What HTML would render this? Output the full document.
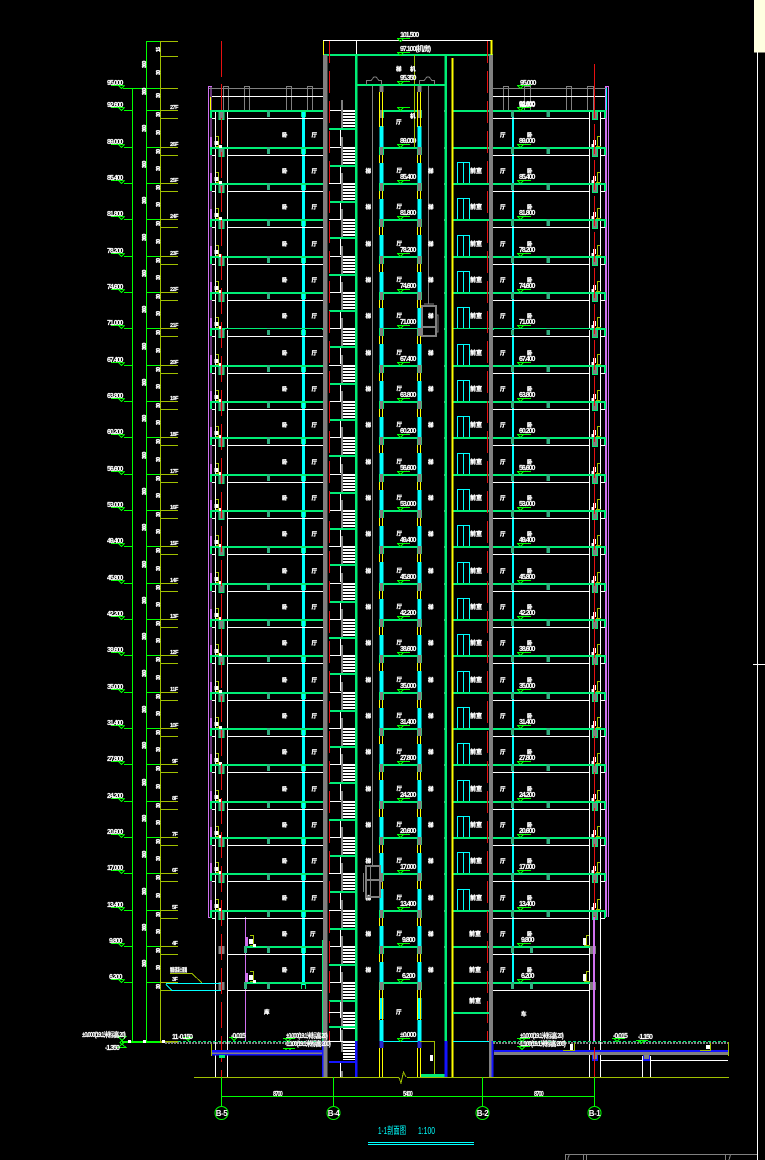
<!DOCTYPE html>
<html lang="zh">
<head>
<meta charset="utf-8">
<title>1-1剖面图</title>
<style>
html,body{margin:0;padding:0;background:#000;width:765px;height:1160px;overflow:hidden}
svg{display:block;shape-rendering:crispEdges}
text{fill:#fff;stroke:#fff;stroke-width:.15px;font:bold 7px "Liberation Sans","Noto Sans CJK SC",sans-serif;letter-spacing:-1px}
.b{font-size:5.500px;letter-spacing:0;stroke-width:.35px}
.h{font-size:6px;letter-spacing:0;stroke-width:.35px}
.c{font-size:5px;letter-spacing:-.5px;stroke-width:.35px}
.n{font-size:5.500px;letter-spacing:-.5px}
.ax{font-size:8px;letter-spacing:-.5px;text-anchor:middle;stroke:none}
.ti{fill:#0ff;stroke:none;font-size:10px;font-weight:normal;letter-spacing:0}
path{fill:none}
.w{stroke:#fff}.gy{stroke:#808080}.sg{stroke:#00ee76}.lg{stroke:#0f0}.ol{stroke:#a0c000}.cy{stroke:#0ff}.ye{stroke:#ff0}.re{stroke:#e81010}.bl{stroke:#1414ff}.pu{stroke:#d070f0}
</style>
</head>
<body>
<svg width="765" height="1160" viewBox="0 0 765 1160" xmlns="http://www.w3.org/2000/svg">
<defs>
<g id="d">
<path class="lg" d="M111,-2.500H123.500M118.500,-2.500l3,3l3,-3M124,.500H132M146,.500H160"/>
<path class="ol" d="M160,.500H178M160,8.500H178"/>
<text class="c" transform="translate(146,-15) rotate(-90)">360</text>
<text class="c" transform="translate(160,-12) rotate(-90)">30</text>
<text class="c" transform="translate(160,7) rotate(-90)">30</text>
</g>
<g id="s">
<rect x="329" y="0" width="13" height="1" fill="#fff"/>
<path class="w" stroke-width="12" stroke-dasharray="2 1" d="M349,0V18"/>
<rect x="329" y="18" width="26" height="2" fill="#00ee76"/>
<rect x="341" y="-10" width="2" height="28" fill="#808080"/>
<path class="w" d="M340.500,20V36"/>
</g>
<g id="m">
<rect x="381" y="0" width="38" height="2" fill="#00ee76"/>
<rect x="453" y="0" width="37" height="2" fill="#00ee76"/>
<rect x="379.500" y="0" width="4" height="8" fill="#808080"/>
<path class="sg" d="M379.500,0V8M383.500,0V8M417.500,0V8M421.500,0V8"/>
<rect x="417.500" y="0" width="4" height="8" fill="#808080"/>
<path class="ye" d="M379.500,8V16M382.500,8V16M417.500,8V16M420.500,8V16"/>
<rect x="379.500" y="16" width="4" height="21" fill="#0ff"/>
<rect x="417.500" y="16" width="4" height="21" fill="#0ff"/>
<path class="lg" d="M397,-2.500H410M397.500,-2.500l3,3l3,-3M517,-2.500H531M517.500,-2.500l3,3l3,-3"/>
<rect x="444" y="0" width="2" height="2" fill="#808080"/>
</g>
<g id="l">
<rect x="210" y="0" width="113" height="2" fill="#00ee76"/>
<rect x="227" y="8" width="96" height="1" fill="#fff"/>
<rect x="218.500" y="1" width="6" height="9" fill="#00ee76"/>
<rect x="219.500" y="2" width="4" height="7" fill="#808080"/>
<rect x="267" y="0" width="3" height="7" fill="#30b080"/>
<path class="sg" d="M301.500,0V7M305.500,0V7"/>
<rect x="210" y="0" width="2" height="8" fill="#00ee76"/>
<path class="w" d="M212,8.500H216"/>
</g>
<g id="r">
<rect x="493" y="0" width="113" height="2" fill="#00ee76"/>
<rect x="493" y="8" width="97" height="1" fill="#fff"/>
<rect x="600" y="8" width="5" height="1" fill="#fff"/>
<rect x="511" y="0" width="3" height="7" fill="#30b080"/>
<rect x="546.500" y="0" width="3.500" height="7" fill="#30b080"/>
<rect x="592" y="1" width="6" height="9" fill="#00ee76"/>
<rect x="593" y="2" width="4" height="7" fill="#808080"/>
<rect x="604" y="0" width="2" height="8" fill="#00ee76"/>
</g>
<g id="a"><use href="#d"/><use href="#s"/><use href="#m"/><use href="#l"/><use href="#r"/></g>
<g id="k">
<rect x="210" y="-10" width="2" height="10" fill="#d070f0"/>
<path class="ol" d="M216,-10.500H218.500V-1M216,-.500H220M600,-10.500H597.500V-1M596,-.500H601"/>
<rect x="214.500" y="-6" width="4" height="4" fill="#fff"/>
<rect x="219" y="-2" width="3" height="3" fill="#fff"/>
<rect x="593" y="-7" width="3" height="5" fill="#fff"/>
<rect x="591.500" y="-3" width="3" height="3" fill="#fff"/>
<text class="b" x="282" y="-10">卧</text>
<text class="b" x="311.500" y="-10">厅</text>
<text class="b" x="500" y="-10">厅</text>
<text class="b" x="527" y="-10">卧</text>
</g>
<g id="e">
<path class="cy" d="M457.500,0V-20.500H469.500V0M463.500,-20V0"/>
<text class="b" x="365.500" y="-10">梯</text>
<text class="b" x="428" y="-10">梯</text>
<text class="b" x="396.500" y="-10.500">厅</text>
<text class="h" x="470" y="-10">前室</text>
</g>
<g id="q">
<rect x="245" y="0" width="78" height="2" fill="#00ee76"/>
<rect x="227" y="8" width="96" height="1" fill="#fff"/>
<rect x="218.500" y="0" width="6" height="8" fill="#808080"/>
<rect x="244" y="0" width="3" height="7" fill="#30b080"/>
<rect x="267" y="0" width="3" height="7" fill="#30b080"/>
<path class="sg" d="M301.500,0V7M305.500,0V7"/>
<rect x="245" y="-9" width="3" height="9" fill="#d070f0"/>
<path class="ol" d="M250,-10.500H253.500V-1M250,-.500H254"/>
<rect x="249" y="-7" width="4" height="5" fill="#fff"/>
<rect x="253" y="-2" width="3" height="3" fill="#fff"/>
<rect x="493" y="0" width="97" height="2" fill="#00ee76"/>
<rect x="493" y="8" width="97" height="1" fill="#fff"/>
<rect x="511" y="0" width="3" height="7" fill="#30b080"/>
<rect x="530" y="0" width="3" height="7" fill="#30b080"/>
<rect x="590" y="0" width="6" height="8" fill="#808080"/>
<path class="ol" d="M589,-10.500H586.500V-1M584,-.500H590"/>
<rect x="583" y="-8" width="3" height="7" fill="#fff"/>
<text class="b" x="282" y="-10">卧</text>
<text class="b" x="310" y="-10">厅</text>
<text class="b" x="500" y="-10">厅</text>
<text class="b" x="527" y="-10">卧</text>
<text class="b" x="365.500" y="-10">梯</text>
<text class="b" x="428" y="-10">梯</text>
<text class="b" x="396.500" y="-10.500">厅</text>
<text class="h" x="469" y="-10">前室</text>
</g>
</defs>

<rect width="765" height="1160" fill="#000"/>

<!-- left dimension rails -->
<path class="lg" d="M132.500,88V1041M146.500,41V1041M146,41.500H160M123,88.500H160"/>
<path class="ol" d="M160.500,41V1041M160,41.500H178M160,56.500H178M160,88.500H178"/>
<text class="c" transform="translate(146,68) rotate(-90)">360</text>
<text class="c" transform="translate(160,52) rotate(-90)">15</text>
<text class="c" transform="translate(160,75) rotate(-90)">30</text>
<path class="lg" d="M111,85.500H123.500M118.500,85.500l3,3l3,-3"/>
<text x="107" y="85">95.000</text>

<!-- continuous verticals under the slabs -->
<path class="pu" d="M208.500,86V917.500H212M208.500,86.500H212M211,86V917"/>
<rect x="605" y="86" width="2" height="831" fill="#d070f0"/>
<path class="pu" d="M608.500,86V917M605,86.500H609"/>
<path class="ye" d="M210.500,97V110"/>
<path class="cy" d="M606.500,88V110"/>
<path class="w" d="M215.500,111V1077M227.500,111V1077M589.500,111V1077M600.500,111V1077"/>
<rect x="302" y="110" width="3" height="875" fill="#0ff"/>
<rect x="512" y="110" width="2" height="875" fill="#0ff"/>
<path class="gy" d="M372.500,85V866M428.500,85V304"/>
<path class="pu" d="M245.500,917V1041"/>

<!-- parapet -->
<path class="gy" d="M209,88.500H323M491,88.500H606M223.500,110V86.500H228.500V110M244.500,110V86.500H249.500V110M286.500,110V86.500H291.500V110M307.500,110V86.500H312.500V110M503.500,110V86.500H508.500V110M524.500,110V86.500H530.500V110M566.500,110V86.500H571.500V110M587.500,110V86.500H593.500V110"/>
<path class="w" d="M212,96.500H323M491,96.500H605"/>

<!-- floors -->
<g transform="translate(0,110)"><use href="#a"/><text x="107" y="-3">92.600</text><text class="n" x="170" y="-1">27F</text><text x="519" y="-4">92.600</text></g>
<g transform="translate(0,147)"><use href="#a"/><use href="#k"/><text x="107" y="-3">89.000</text><text class="n" x="170" y="-1">26F</text><text x="400" y="-4">89.000</text><text x="519" y="-4">89.000</text></g>
<g transform="translate(0,183)"><use href="#a"/><use href="#k"/><use href="#e"/><text x="107" y="-3">85.400</text><text class="n" x="170" y="-1">25F</text><text x="400" y="-4">85.400</text><text x="519" y="-4">85.400</text></g>
<g transform="translate(0,219)"><use href="#a"/><use href="#k"/><use href="#e"/><text x="107" y="-3">81.800</text><text class="n" x="170" y="-1">24F</text><text x="400" y="-4">81.800</text><text x="519" y="-4">81.800</text></g>
<g transform="translate(0,256)"><use href="#a"/><use href="#k"/><use href="#e"/><text x="107" y="-3">78.200</text><text class="n" x="170" y="-1">23F</text><text x="400" y="-4">78.200</text><text x="519" y="-4">78.200</text></g>
<g transform="translate(0,292)"><use href="#a"/><use href="#k"/><use href="#e"/><text x="107" y="-3">74.600</text><text class="n" x="170" y="-1">22F</text><text x="400" y="-4">74.600</text><text x="519" y="-4">74.600</text></g>
<g transform="translate(0,328)"><use href="#a"/><use href="#k"/><use href="#e"/><text x="107" y="-3">71.000</text><text class="n" x="170" y="-1">21F</text><text x="400" y="-4">71.000</text><text x="519" y="-4">71.000</text></g>
<g transform="translate(0,365)"><use href="#a"/><use href="#k"/><use href="#e"/><text x="107" y="-3">67.400</text><text class="n" x="170" y="-1">20F</text><text x="400" y="-4">67.400</text><text x="519" y="-4">67.400</text></g>
<g transform="translate(0,401)"><use href="#a"/><use href="#k"/><use href="#e"/><text x="107" y="-3">63.800</text><text class="n" x="170" y="-1">19F</text><text x="400" y="-4">63.800</text><text x="519" y="-4">63.800</text></g>
<g transform="translate(0,437)"><use href="#a"/><use href="#k"/><use href="#e"/><text x="107" y="-3">60.200</text><text class="n" x="170" y="-1">18F</text><text x="400" y="-4">60.200</text><text x="519" y="-4">60.200</text></g>
<g transform="translate(0,474)"><use href="#a"/><use href="#k"/><use href="#e"/><text x="107" y="-3">56.600</text><text class="n" x="170" y="-1">17F</text><text x="400" y="-4">56.600</text><text x="519" y="-4">56.600</text></g>
<g transform="translate(0,510)"><use href="#a"/><use href="#k"/><use href="#e"/><text x="107" y="-3">53.000</text><text class="n" x="170" y="-1">16F</text><text x="400" y="-4">53.000</text><text x="519" y="-4">53.000</text></g>
<g transform="translate(0,546)"><use href="#a"/><use href="#k"/><use href="#e"/><text x="107" y="-3">49.400</text><text class="n" x="170" y="-1">15F</text><text x="400" y="-4">49.400</text><text x="519" y="-4">49.400</text></g>
<g transform="translate(0,583)"><use href="#a"/><use href="#k"/><use href="#e"/><text x="107" y="-3">45.800</text><text class="n" x="170" y="-1">14F</text><text x="400" y="-4">45.800</text><text x="519" y="-4">45.800</text></g>
<g transform="translate(0,619)"><use href="#a"/><use href="#k"/><use href="#e"/><text x="107" y="-3">42.200</text><text class="n" x="170" y="-1">13F</text><text x="400" y="-4">42.200</text><text x="519" y="-4">42.200</text></g>
<g transform="translate(0,655)"><use href="#a"/><use href="#k"/><use href="#e"/><text x="107" y="-3">38.600</text><text class="n" x="170" y="-1">12F</text><text x="400" y="-4">38.600</text><text x="519" y="-4">38.600</text></g>
<g transform="translate(0,692)"><use href="#a"/><use href="#k"/><use href="#e"/><text x="107" y="-3">35.000</text><text class="n" x="170" y="-1">11F</text><text x="400" y="-4">35.000</text><text x="519" y="-4">35.000</text></g>
<g transform="translate(0,728)"><use href="#a"/><use href="#k"/><use href="#e"/><text x="107" y="-3">31.400</text><text class="n" x="170" y="-1">10F</text><text x="400" y="-4">31.400</text><text x="519" y="-4">31.400</text></g>
<g transform="translate(0,764)"><use href="#a"/><use href="#k"/><use href="#e"/><text x="107" y="-3">27.800</text><text class="n" x="172" y="-1">9F</text><text x="400" y="-4">27.800</text><text x="519" y="-4">27.800</text></g>
<g transform="translate(0,801)"><use href="#a"/><use href="#k"/><use href="#e"/><text x="107" y="-3">24.200</text><text class="n" x="172" y="-1">8F</text><text x="400" y="-4">24.200</text><text x="519" y="-4">24.200</text></g>
<g transform="translate(0,837)"><use href="#a"/><use href="#k"/><use href="#e"/><text x="107" y="-3">20.600</text><text class="n" x="172" y="-1">7F</text><text x="400" y="-4">20.600</text><text x="519" y="-4">20.600</text></g>
<g transform="translate(0,873)"><use href="#a"/><use href="#k"/><use href="#e"/><text x="107" y="-3">17.000</text><text class="n" x="172" y="-1">6F</text><text x="400" y="-4">17.000</text><text x="519" y="-4">17.000</text></g>
<g transform="translate(0,910)"><use href="#a"/><use href="#k"/><use href="#e"/><text x="107" y="-3">13.400</text><text class="n" x="172" y="-1">5F</text><text x="400" y="-4">13.400</text><text x="519" y="-4">13.400</text></g>
<g transform="translate(0,946)"><use href="#d"/><use href="#s"/><use href="#m"/><use href="#q"/><text x="109" y="-3">9.800</text><text class="n" x="172" y="-1">4F</text><text x="402" y="-4">9.800</text><text x="521" y="-4">9.800</text></g>
<g transform="translate(0,982)"><use href="#d"/><use href="#s"/><use href="#m"/><use href="#q"/><text x="109" y="-3">6.200</text><text class="n" x="172" y="-1">3F</text><text x="402" y="-4">6.200</text><text x="521" y="-4">6.200</text></g>

<!-- thin slab row -->
<rect x="225" y="329" width="97" height="1" fill="#000"/>
<rect x="384" y="329" width="33" height="1" fill="#000"/>
<rect x="453" y="329" width="36" height="1" fill="#000"/>
<rect x="494" y="329" width="96" height="1" fill="#000"/>
<rect x="302" y="329" width="3" height="1" fill="#0ff"/>
<rect x="512" y="329" width="2" height="1" fill="#0ff"/>

<!-- top room -->
<path class="w" d="M323,40.500H491M356.500,41V55"/>
<rect x="323" y="54" width="170" height="2" fill="#00ee76"/>
<path class="ye" d="M323.500,41V55M491.500,41V55"/>
<rect x="490.500" y="40" width="2" height="15" fill="#ff0"/>
<path class="ol" d="M414.500,55V147"/>
<rect x="357" y="84" width="88" height="2" fill="#00ee76"/>
<rect x="379.500" y="86" width="4" height="6" fill="#808080"/>
<rect x="417.500" y="86" width="4" height="6" fill="#808080"/>
<path class="ye" d="M379.500,92V127M382.500,92V127M417.500,92V127M420.500,92V127"/>
<rect x="379.500" y="127" width="4" height="20" fill="#0ff"/>
<rect x="417.500" y="127" width="4" height="20" fill="#0ff"/>
<path class="gy" d="M366.500,85V80.500H371L374,77H376L379,80.500H381.500V85M419.500,85V80.500H424L427,77H429L432,80.500H434.500V85"/>
<path class="lg" d="M397,38.500H410M397.500,38.500l3,3l3,-3M397,52.500H410M397.500,52.500l3,3l3,-3M397,81.500H410M397.500,81.500l3,3l3,-3M517,85.500H531M517.500,85.500l3,3l3,-3M517,107.500H531M517.500,107.500l3,3l3,-3"/>
<text x="400" y="37">101.500</text>
<text x="400" y="51">97.100(机房)</text>
<text class="b" x="396" y="71">梯</text>
<text class="b" x="410" y="71">机</text>
<text x="400" y="80">95.350</text>
<text class="b" x="396" y="124">厅</text>
<text class="b" x="410" y="118">机</text>
<text x="520" y="85">95.000</text>
<text x="519" y="107">92.600</text>

<!-- elevator cars -->
<path class="gy" stroke-width="2" d="M422,306H436V336H422ZM422,327H436"/>
<path class="gy" d="M424,304H434M436,315H438V332H436"/>
<path class="gy" stroke-width="2" d="M366,866H380V897H366ZM366,880H380"/>
<path class="gy" d="M363.500,873V892M370.500,866V897"/>
<rect x="379" y="875" width="4" height="7" fill="#808080"/>

<!-- walls -->
<rect x="355" y="55" width="2.500" height="986" fill="#00ee76"/>
<rect x="444.500" y="55" width="2.500" height="986" fill="#00ee76"/>
<rect x="451.500" y="58" width="2" height="1019" fill="#ff0"/>
<rect x="322" y="940" width="1" height="101" fill="#00ee76"/>
<rect x="323" y="55" width="4.500" height="1022" fill="#808080"/>
<rect x="489" y="55" width="4" height="1022" fill="#808080"/>
<path class="re" d="M221.500,41V77"/>
<path class="re" stroke-dasharray="26 8" d="M221.500,84V1077"/>
<path class="re" stroke-dasharray="22 8" d="M329.500,41V1041"/>
<path class="re" stroke-dasharray="22 8" d="M487.500,41V1041"/>
<path class="re" d="M594.500,64V88"/>
<path class="re" stroke-dasharray="30 6" d="M594.500,88V917"/>
<path class="re" d="M594.500,1047V1077"/>
<rect x="593" y="917" width="2" height="124" fill="#d070f0"/>

<!-- lower storeys of core -->
<rect x="453" y="1012" width="36" height="2" fill="#00ee76"/>
<rect x="379.500" y="982" width="4" height="8" fill="#808080"/>
<rect x="417.500" y="982" width="4" height="8" fill="#808080"/>
<path class="ye" d="M379.500,990V1020M382.500,990V1020M417.500,990V1020M420.500,990V1020M379.500,1048V1077M382.500,1048V1077M417.500,1048V1077M420.500,1048V1077"/>
<rect x="379.500" y="1020" width="4" height="21" fill="#0ff"/>
<rect x="417.500" y="1020" width="4" height="21" fill="#0ff"/>
<rect x="379.500" y="1041" width="4" height="7" fill="#2a2ad0"/>
<rect x="417.500" y="1041" width="4" height="7" fill="#2a2ad0"/>
<path class="cy" d="M383,1041.500H418M453,1041.500H489"/>
<path class="ol" d="M420,1041.500H434.500V1074"/>
<rect x="430" y="1055" width="3" height="6" fill="#fff"/>
<rect x="421" y="1074" width="24" height="3" fill="#00ee76"/>
<text class="h" x="469" y="1003">前室</text>
<text class="b" x="396" y="1014">厅</text>
<text class="b" x="264" y="1014">库</text>
<text class="b" x="521" y="1016">车</text>
<text x="400" y="1037">±0.000</text>
<path class="lg" d="M397,1038.500H410M397.500,1038.500l3,3l3,-3"/>

<!-- stairs bottom -->
<rect x="329" y="1012" width="14" height="1" fill="#fff"/>
<path class="w" stroke-width="12" stroke-dasharray="2 1" d="M349,1012V1030M349,1041V1060"/>
<rect x="329" y="1026" width="26" height="2" fill="#00ee76"/>
<rect x="341" y="1000" width="2" height="26" fill="#808080"/>
<rect x="341" y="1030" width="2" height="22" fill="#808080"/>
<rect x="341" y="1071" width="2" height="6" fill="#808080"/>
<path class="w" d="M329,1041.500H343M340.500,1028V1041M340.500,1062V1077"/>
<rect x="329" y="1061" width="26" height="2" fill="#1414ff"/>
<rect x="355" y="1041" width="2.500" height="36" fill="#1414ff"/>
<rect x="322" y="1041" width="1.500" height="36" fill="#1414ff"/>
<rect x="444.500" y="1041" width="3" height="36" fill="#1414ff"/>
<rect x="491.500" y="1041" width="2" height="36" fill="#1414ff"/>

<!-- canopy -->
<path class="cy" d="M166,984.500 172,990.500H221M166,983.500H221"/>
<path class="ol" d="M170,973.500H192L202,983"/>
<text class="b" x="170" y="972" textLength="17" lengthAdjust="spacingAndGlyphs">钢筋混凝土雨篷</text>

<!-- ground -->
<rect x="122" y="1041" width="38" height="2" fill="#0f0"/>
<rect x="160" y="1041" width="18" height="2" fill="#a0c000"/>
<path class="gy" stroke-width="2" stroke-dasharray="2 1" d="M165,1043H323M493,1043H728"/>
<path class="sg" stroke-dasharray="3 2" d="M178,1041.500H323M493,1041.500H728"/>
<rect x="143" y="1040" width="3" height="3" fill="#fff"/>
<rect x="128" y="1040" width="3" height="3" fill="#fff"/>
<rect x="162" y="1040" width="3" height="3" fill="#fff"/>
<path class="lg" d="M118,1036.500H126L120,1042.500L126,1047.500H118L124,1042.500Z"/>
<path class="lg" d="M183,1037.500H193M185,1037.500l3,3l3,-3M229,1037.500H241M231,1037.500l3,3l3,-3M283,1038.500H295M285,1038.500l3,3l3,-3M283,1048.500H295M285,1048.500l3,3l3,-3"/>
<path class="lg" d="M517,1038.500H530M519,1038.500l3,3l3,-3M517,1046.500H530M519,1046.500l3,3l3,-3M612,1038.500H625M614,1038.500l3,3l3,-3M636,1040.500H648M638,1040.500l3,3l3,-3"/>
<text x="82" y="1037" textLength="43" lengthAdjust="spacingAndGlyphs">±0.000(19.1米标高 20)</text>
<text x="105" y="1050">-1.350</text>
<text x="172" y="1039" textLength="20" lengthAdjust="spacingAndGlyphs">11 -0.150</text>
<text x="231" y="1038">-0.015</text>
<text x="286" y="1038" textLength="41" lengthAdjust="spacingAndGlyphs">±0.000(19.1米标高 20)</text>
<text x="285" y="1046" textLength="45" lengthAdjust="spacingAndGlyphs">-1.100(19.1米标高 200)</text>
<text x="520" y="1038" textLength="43" lengthAdjust="spacingAndGlyphs">±0.000(19.1米标高 20)</text>
<text x="519" y="1046" textLength="46" lengthAdjust="spacingAndGlyphs">-1.100(19.1米标高 200)</text>
<text x="613" y="1038">-0.015</text>
<text x="638" y="1039">-1.150</text>

<path class="ol" d="M211.500,1044V1056"/>
<rect x="212" y="1050" width="110" height="2.500" fill="#1414ff"/>
<rect x="212" y="1052.500" width="110" height="1.500" fill="#808080"/>
<rect x="212" y="1054" width="110" height="1.500" fill="#1414ff"/>
<rect x="219" y="1055" width="6" height="3" fill="#00ee76"/>

<rect x="494" y="1050" width="234" height="2" fill="#1414ff"/>
<rect x="494" y="1052" width="234" height="3" fill="#808080"/>
<rect x="592" y="1055" width="6" height="6" fill="#1414ff"/>
<rect x="593" y="1055" width="4" height="4" fill="#808080"/>
<rect x="643" y="1055" width="7" height="6" fill="#1414ff"/>
<rect x="644" y="1055" width="5" height="4" fill="#808080"/>
<path class="w" d="M642.500,1056V1077M650.500,1056V1077M600,1060.500H642M651,1060.500H728"/>
<path class="ol" d="M563,1050.500H574.500V1043M700,1050.500H710.500V1043M728.500,1042V1056"/>
<rect x="570" y="1044" width="3" height="6" fill="#fff"/>
<rect x="706" y="1045" width="4" height="4" fill="#fff"/>
<path class="re" d="M594.500,1047V1077"/>

<!-- base and axes -->
<path class="ol" d="M194,1077.500H399M407,1077.500H729M399,1077.500L401,1083L403.500,1072L406,1077"/>
<path class="lg" d="M221.500,1077V1106M333.500,1077V1106M482.500,1077V1106M594.500,1077V1106M221,1096.500H595"/>
<circle cx="221.500" cy="1113" r="6.500" fill="#000" stroke="#0f0" shape-rendering="auto"/>
<circle cx="333.500" cy="1113" r="6.500" fill="#000" stroke="#0f0" shape-rendering="auto"/>
<circle cx="482.500" cy="1113" r="6.500" fill="#000" stroke="#0f0" shape-rendering="auto"/>
<circle cx="594.500" cy="1113" r="6.500" fill="#000" stroke="#0f0" shape-rendering="auto"/>
<text class="ax" x="221.500" y="1116">B-5</text>
<text class="ax" x="333.500" y="1116">B-4</text>
<text class="ax" x="482.500" y="1116">B-2</text>
<text class="ax" x="594.500" y="1116">B-1</text>
<text x="273" y="1096" textLength="9" lengthAdjust="spacingAndGlyphs">8700</text>
<text x="403" y="1096" textLength="9" lengthAdjust="spacingAndGlyphs">5400</text>
<text x="534" y="1096" textLength="9" lengthAdjust="spacingAndGlyphs">8700</text>

<!-- title -->
<text class="ti" x="378" y="1134" textLength="28" lengthAdjust="spacingAndGlyphs">1-1剖面图</text>
<text class="ti" x="418" y="1134" textLength="17" lengthAdjust="spacingAndGlyphs">1:100</text>
<rect x="368" y="1142" width="106" height="1" fill="#0ff"/>
<rect x="368" y="1144" width="106" height="1" fill="#0ff"/>

<!-- sheet frame -->
<rect x="754" y="0" width="11" height="52.500" fill="#ffffe0"/>
<rect x="757" y="52" width="1" height="1108" fill="#fff"/>
<path class="w" d="M753,664.500H765"/>
<path class="gy" d="M565.500,1160V1154.500H757M569.500,1154.500L568,1158V1160M583.500,1154.500V1160M586.500,1154.500V1160M725.500,1154.500V1160M730.500,1154.500L729,1160"/>
</svg>
</body>
</html>
